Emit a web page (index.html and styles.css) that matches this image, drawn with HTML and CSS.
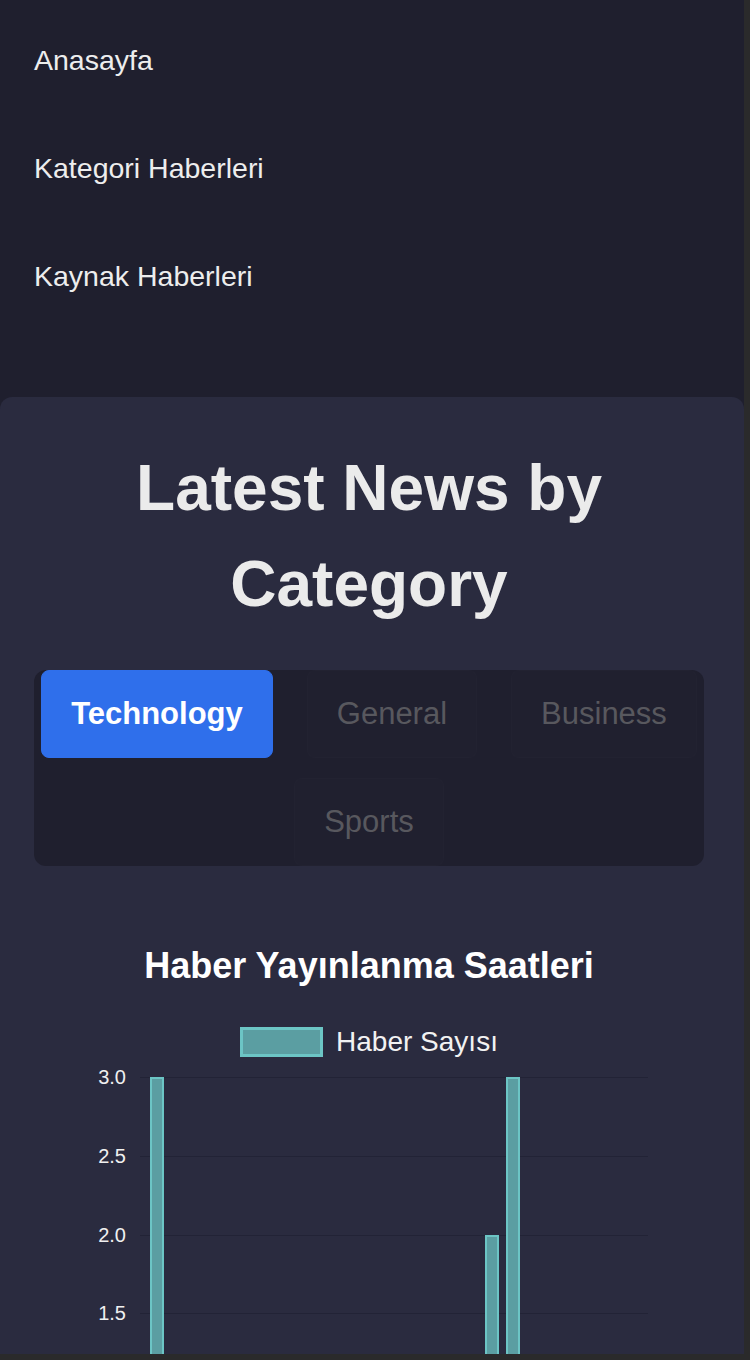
FILE: index.html
```html
<!DOCTYPE html>
<html lang="tr">
<head>
<meta charset="utf-8">
<title>Latest News by Category</title>
<link rel="stylesheet" href="styles.css">
</head>
<body>
<div class="page">
  <nav class="nav">
    <a class="nav-link" href="#">Anasayfa</a>
    <a class="nav-link" href="#">Kategori Haberleri</a>
    <a class="nav-link" href="#">Kaynak Haberleri</a>
  </nav>
  <main class="card">
    <h1 class="title">Latest News by Category</h1>
    <div class="tabs">
      <button class="tab active">Technology</button>
      <button class="tab">General</button>
      <button class="tab">Business</button>
      <button class="tab">Sports</button>
    </div>
    <section class="chart">
      <h2 class="chart-title">Haber Yayınlanma Saatleri</h2>
      <div class="legend">
        <span class="legend-box"></span>
        <span class="legend-label">Haber Sayısı</span>
      </div>
      <svg class="plot" width="670" height="320" viewBox="0 0 670 320">
        <g class="grid">
          <line x1="106" y1="15.5" x2="614" y2="15.5"/>
          <line x1="106" y1="94.5" x2="614" y2="94.5"/>
          <line x1="106" y1="173.5" x2="614" y2="173.5"/>
          <line x1="106" y1="251.5" x2="614" y2="251.5"/>
        </g>
        <g class="ticks">
          <text x="92" y="15">3.0</text>
          <text x="92" y="94">2.5</text>
          <text x="92" y="173">2.0</text>
          <text x="92" y="251">1.5</text>
        </g>
        <g class="bars">
          <rect x="116" y="15" width="14" height="320"/>
          <rect x="451" y="173" width="14" height="200"/>
          <rect x="472" y="15" width="14" height="320"/>
        </g>
        <g class="bar-edges">
          <path d="M117 330 V16 H129 V330"/>
          <path d="M452 330 V174 H464 V330"/>
          <path d="M473 330 V16 H485 V330"/>
        </g>
      </svg>
    </section>
  </main>
</div>
</body>
</html>
```

FILE: styles.css
```css
html, body {
  margin: 0;
  padding: 0;
  background: #2a2a2b;
}

body {
  font-family: "Liberation Sans", Arial, Helvetica, sans-serif;
  color: #ececec;
}

.page {
  width: 744px;
  height: 1354px;
  overflow: hidden;
  background: #1f1f2e;
}

.nav {
  display: flex;
  flex-direction: column;
  padding: 6px 34px 67px;
}

.nav-link {
  display: block;
  padding: 38px 0;
  font-size: 28.5px;
  line-height: 32px;
  color: #ededed;
  text-decoration: none;
}

.card {
  background: #2a2b3f;
  border-radius: 12px 12px 0 0;
  padding: 43px 40px 0 34px;
  min-height: 1000px;
}

.title {
  margin: 0 0 38px;
  font-size: 64px;
  line-height: 96px;
  font-weight: 700;
  text-align: center;
  color: #ebebeb;
}

.tabs {
  display: flex;
  flex-wrap: wrap;
  justify-content: center;
  column-gap: 34px;
  row-gap: 20px;
  padding: 0 6px;
  background: #1f1f2e;
  border-radius: 12px;
}

.tab {
  font-family: "Liberation Sans", Arial, Helvetica, sans-serif;
  font-size: 31px;
  line-height: 36px;
  padding: 25px 29px;
  border: 1px solid rgba(255, 255, 255, 0.01);
  border-radius: 8px;
  background: #20202f;
  color: #58585e;
  cursor: pointer;
}

.tab.active {
  background: #2f6feb;
  border-color: #2f6feb;
  color: #ffffff;
  font-weight: 700;
}

.chart {
  margin-top: 78px;
}

.chart-title {
  margin: 0;
  font-size: 36px;
  line-height: 44px;
  font-weight: 700;
  text-align: center;
  color: #ffffff;
}

.legend {
  display: flex;
  justify-content: center;
  align-items: center;
  gap: 13px;
  margin-top: 39px;
  height: 30px;
}

.legend-box {
  display: block;
  width: 77px;
  height: 24px;
  background: #5b9ea2;
  border: 3px solid #6cc5c5;
}

.legend-label {
  font-size: 28px;
  line-height: 30px;
  color: #f2f2f2;
}

.plot {
  display: block;
  margin-top: 5px;
  overflow: visible;
}

.grid line {
  stroke: #222336;
  stroke-width: 1;
}

.ticks text {
  font-family: "Liberation Sans", Arial, Helvetica, sans-serif;
  font-size: 20px;
  fill: #f0f0f0;
  text-anchor: end;
  dominant-baseline: central;
}

.bars rect {
  fill: #5b9ea2;
}

.bar-edges path {
  fill: none;
  stroke: #6cc5c5;
  stroke-width: 2;
}
```
